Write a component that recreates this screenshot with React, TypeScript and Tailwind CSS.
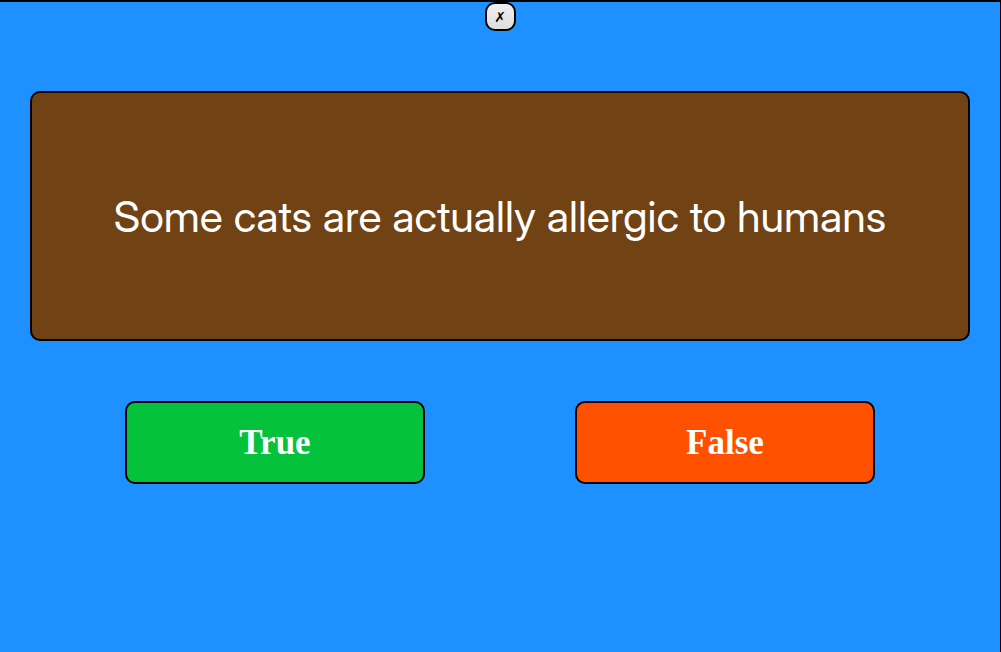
const answers = [
  { label: 'True', color: 'bg-[#04c23c]' },
  { label: 'False', color: 'bg-[#ff5000]' },
];

export default function App() {
  return (
    <main className="flex min-h-screen flex-col border-t-2 border-r border-black bg-[#1e90ff]">
      <button
        type="button"
        aria-label="Close question"
        className="flex h-[29px] w-[31px] items-center justify-center self-center rounded-[10px] border-2 border-black bg-linear-to-b from-[#f0f0f0] to-[#dedede] font-['DejaVu_Sans',sans-serif] text-[14px] leading-none font-bold text-black"
      >
        ✗
      </button>
      <section className="mx-[30px] mt-[60px] flex h-[250px] items-center justify-center rounded-[10px] border-2 border-black bg-[#704214] px-6 text-center">
        <h1 className="font-['Inter_Display','Inter',sans-serif] text-[43px] leading-[52px] font-normal text-white">
          Some cats are actually allergic to humans
        </h1>
      </section>
      <div className="mt-[60px] grid grid-cols-2 px-[50px]">
        {answers.map(({ label, color }) => (
          <div key={label} className="flex justify-center">
            <button
              type="button"
              className={`${color} h-[83px] w-full max-w-[300px] rounded-[10px] border-2 border-black font-['Liberation_Serif',serif] text-[35px] leading-10 font-bold text-white`}
            >
              {label}
            </button>
          </div>
        ))}
      </div>
    </main>
  );
}
